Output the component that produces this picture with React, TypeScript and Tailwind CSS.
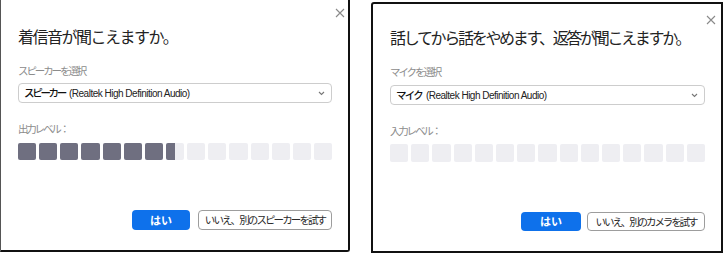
import React from "react";

const JP = { fontFamily: '"Noto Sans CJK JP", "Noto Sans", sans-serif' };
const LAT = { fontFamily: '"Liberation Sans", Arial, sans-serif' };

function CloseX() {
  return (
    <svg width="10" height="10" viewBox="0 0 10 10" className="block">
      <path d="M1 1 L9 9 M9 1 L1 9" stroke="#8a8a8a" strokeWidth="1.1" fill="none" />
    </svg>
  );
}

function Chevron() {
  return (
    <svg width="7" height="5" viewBox="0 0 7 5" className="block">
      <path d="M1 1 L3.5 3.5 L6 1" stroke="#777" strokeWidth="1.1" fill="none" />
    </svg>
  );
}

function Bars({ full, partial, h }: { full: number; partial: number; h: string }) {
  const items = Array.from({ length: 15 }, (_, i) => i);
  return (
    <div className={`flex gap-[3px] ${h}`}>
      {items.map((i) => (
        <div key={i} className="relative flex-1 overflow-hidden rounded-[2px] bg-[#eeeef2]">
          {i < full && <div className="absolute inset-0 bg-[#6f6f80]" />}
          {i === full && partial > 0 && (
            <div className="absolute inset-y-0 left-0 bg-[#6f6f80]" style={{ width: `${partial * 100}%` }} />
          )}
        </div>
      ))}
    </div>
  );
}

export default function App() {
  return (
    <div className="flex h-[253px] w-[724px] items-start bg-white" style={JP}>
      {/* Left dialog */}
      <div className="relative flex h-[252px] w-[350px] flex-col border-l border-r-2 border-b-2 border-l-[#555] border-r-[#111] border-b-[#111] bg-white pl-[17px] pr-[16px] pt-[25px] rounded-br-[3px]">
        <div className="absolute right-[3px] top-[8px]">
          <CloseX />
        </div>
        <div className="h-[22px] text-[16px] leading-[22px] tracking-[-1.5px] text-[#232323]">
          着信音が聞こえますか。
        </div>
        <div className="mt-[17px] h-[14px] text-[10.5px] leading-[14px] tracking-[-2.1px] text-[#8c8c8c]">
          スピーカーを選択
        </div>
        <div className="mt-[5px] flex h-[20px] items-center justify-between rounded-[4px] border border-[#cdcdcd] pl-[5px] pr-[6px]">
          <div className="flex items-baseline whitespace-nowrap">
            <span className="text-[10.5px] font-medium tracking-[-2.3px] text-[#111]">スピーカー</span>
            <span className="ml-[4px] text-[10px] tracking-[-0.5px] text-[#222]" style={LAT}>(Realtek High Definition Audio)</span>
          </div>
          <Chevron />
        </div>
        <div className="mt-[19px] h-[14px] text-[10.5px] leading-[14px] tracking-[-2.2px] text-[#8c8c8c]">
          出力レベル：
        </div>
        <div className="mt-[7px]">
          <Bars full={7} partial={0.5} h="h-[17px]" />
        </div>
        <div className="mt-[50px] flex h-[20px] justify-end gap-[8px]">
          <div className="flex w-[58px] items-center justify-center rounded-[4px] bg-[#0e71eb] text-[11px] font-bold text-white">
            はい
          </div>
          <div className="flex w-[134px] items-center justify-center rounded-[4px] border border-[#9d9d9d] text-[10.5px] tracking-[-1.9px] text-[#2a2a2a] whitespace-nowrap">
            いいえ、別のスピーカーを試す
          </div>
        </div>
      </div>

      {/* Right dialog */}
      <div className="relative ml-[21px] mt-[2px] flex h-[251px] w-[352px] flex-col border-2 border-[#111] bg-white pl-[17px] pr-[16px] pt-[22px] rounded-tl-[3px]">
        <div className="absolute right-[5px] top-[11px]">
          <CloseX />
        </div>
        <div className="h-[22px] whitespace-nowrap text-[16px] leading-[22px] tracking-[-2.3px] text-[#232323]">
          話してから話をやめます、返答が聞こえますか。
        </div>
        <div className="mt-[17px] h-[14px] text-[10.5px] leading-[14px] tracking-[-2.1px] text-[#8c8c8c]">
          マイクを選択
        </div>
        <div className="mt-[6px] flex h-[20px] items-center justify-between rounded-[4px] border border-[#cdcdcd] pl-[5px] pr-[6px]">
          <div className="flex items-baseline whitespace-nowrap">
            <span className="text-[10.5px] font-medium tracking-[-1.8px] text-[#111]">マイク</span>
            <span className="ml-[4px] text-[10px] tracking-[-0.5px] text-[#222]" style={LAT}>(Realtek High Definition Audio)</span>
          </div>
          <Chevron />
        </div>
        <div className="mt-[19px] h-[14px] text-[10.5px] leading-[14px] tracking-[-2.2px] text-[#8c8c8c]">
          入力レベル：
        </div>
        <div className="mt-[6px]">
          <Bars full={0} partial={0} h="h-[18px]" />
        </div>
        <div className="mt-[50px] flex h-[19px] justify-end gap-[6px]">
          <div className="flex w-[60px] items-center justify-center rounded-[4px] bg-[#0e71eb] text-[11px] font-bold text-white">
            はい
          </div>
          <div className="flex w-[118px] items-center justify-center rounded-[4px] border border-[#9d9d9d] text-[10.5px] tracking-[-2.1px] text-[#2a2a2a] whitespace-nowrap">
            いいえ、別のカメラを試す
          </div>
        </div>
      </div>
    </div>
  );
}
